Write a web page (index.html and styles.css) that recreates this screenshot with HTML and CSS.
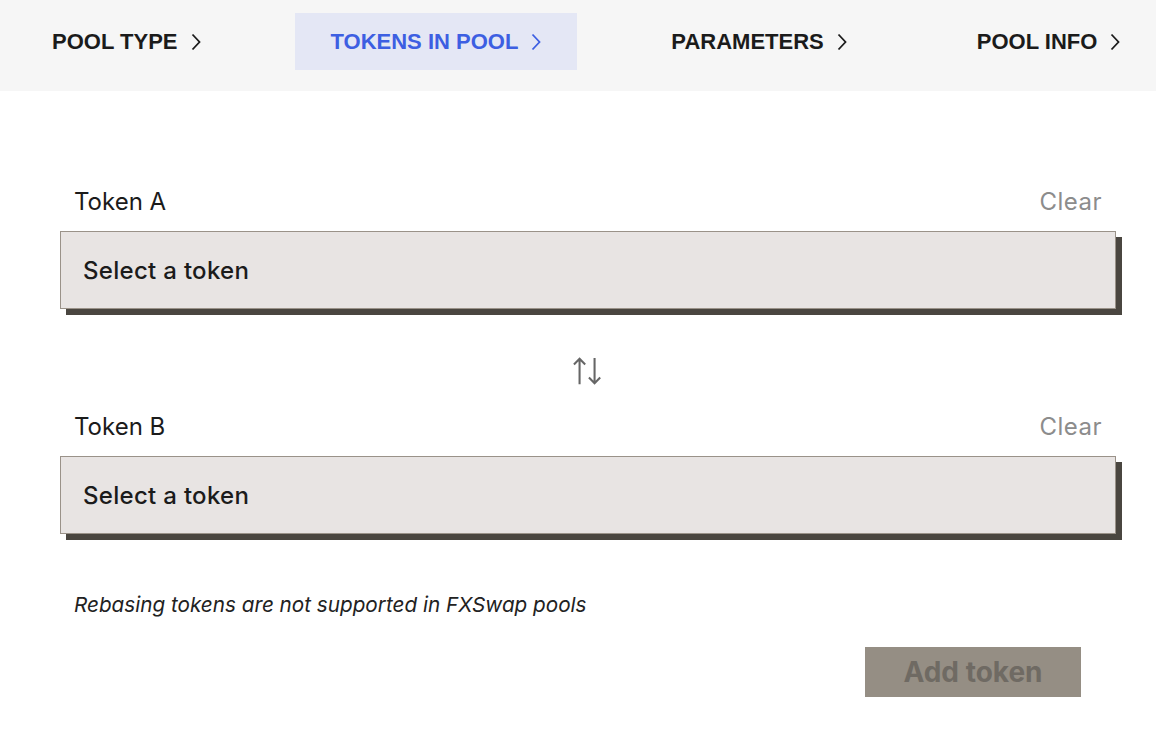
FILE: index.html
```html
<!DOCTYPE html>
<html>
<head>
<meta charset="utf-8">
<link rel="stylesheet" href="styles.css">
</head>
<body>
<header class="steps">
  <div class="step">POOL TYPE <svg class="chev" viewBox="0 0 10 18"><path d="M1.5 1.5 L8.5 9 L1.5 16.5"/></svg></div>
  <div class="step active">TOKENS IN POOL <svg class="chev" viewBox="0 0 10 18"><path d="M1.5 1.5 L8.5 9 L1.5 16.5"/></svg></div>
  <div class="step">PARAMETERS <svg class="chev" viewBox="0 0 10 18"><path d="M1.5 1.5 L8.5 9 L1.5 16.5"/></svg></div>
  <div class="step">POOL INFO <svg class="chev" viewBox="0 0 10 18"><path d="M1.5 1.5 L8.5 9 L1.5 16.5"/></svg></div>
</header>
<main class="content">
  <div class="field">
    <div class="label-row"><span class="label">Token A</span><span class="clear">Clear</span></div>
    <div class="select">Select a token</div>
  </div>
  <div class="swap">
    <svg viewBox="0 0 34 32" class="swap-icon"><path d="M8 30 V3 M2 9 L8 3 L14 9 M24 2 V29 M18 23 L24 29 L30 23"/></svg>
  </div>
  <div class="field">
    <div class="label-row"><span class="label">Token B</span><span class="clear">Clear</span></div>
    <div class="select">Select a token</div>
  </div>
  <p class="note">Rebasing tokens are not supported in FXSwap pools</p>
  <div class="actions"><button class="add">Add token</button></div>
</main>
</body>
</html>
```
FILE: styles.css
```css
* { box-sizing: border-box; }
html, body { margin: 0; padding: 0; background: #fff; }
body { font-family: Inter, "Liberation Sans", sans-serif; color: #1b1b1b; width: 1156px; height: 736px; overflow: hidden; }

.steps {
  height: 91px;
  background: #f6f6f6;
  display: flex;
  align-items: flex-start;
  padding: 13px 0 0 16px;
  gap: 58px;
  overflow: hidden;
  white-space: nowrap;
}
.step {
  height: 57px;
  padding: 0 36px;
  display: flex;
  align-items: center;
  gap: 13px;
  font-family: "Liberation Sans", Arial, sans-serif;
  font-size: 22px;
  font-weight: 700;
  letter-spacing: 0;
  color: #1b1b1b;
  flex: none;
}
.step.active { background: #e4e7f5; color: #3d5fe2; }
.chev { width: 10px; height: 18px; fill: none; stroke: currentColor; stroke-width: 1.8; }

.content { padding: 95px 40px 0 60px; }
.label-row {
  display: flex;
  justify-content: space-between;
  padding: 0 14px;
  height: 30px;
  align-items: center;
  font-size: 24px;
  margin-bottom: 15px;
}
.label { color: #1b1b1b; }
.clear { color: #8c8c8c; letter-spacing: 0.5px; }
.select {
  height: 78px;
  background: #e8e4e3;
  border: 1px solid #9a9289;
  box-shadow: 6px 6px 0 #4a4640;
  display: flex;
  align-items: center;
  padding-left: 22px;
  font-size: 24px;
  font-weight: 500;
  letter-spacing: 0.3px;
  color: #1b1b1b;
}
.swap { display: flex; justify-content: center; padding: 47px 0 25px; }
.swap-icon { width: 34px; height: 30px; fill: none; stroke: #666; stroke-width: 2.2; }
.note {
  margin: 59px 0 0 14px;
  font-size: 20.7px;
  line-height: 24px;
  font-style: italic;
  color: #222;
}
.actions { display: flex; justify-content: flex-end; padding-right: 35px; margin-top: 30px; }
.add {
  width: 216px;
  height: 50px;
  border: none;
  background: #958e84;
  color: #6f6a63;
  font-family: Inter, "Liberation Sans", sans-serif;
  font-size: 28px;
  font-weight: 700;
  letter-spacing: 0;
}
```
